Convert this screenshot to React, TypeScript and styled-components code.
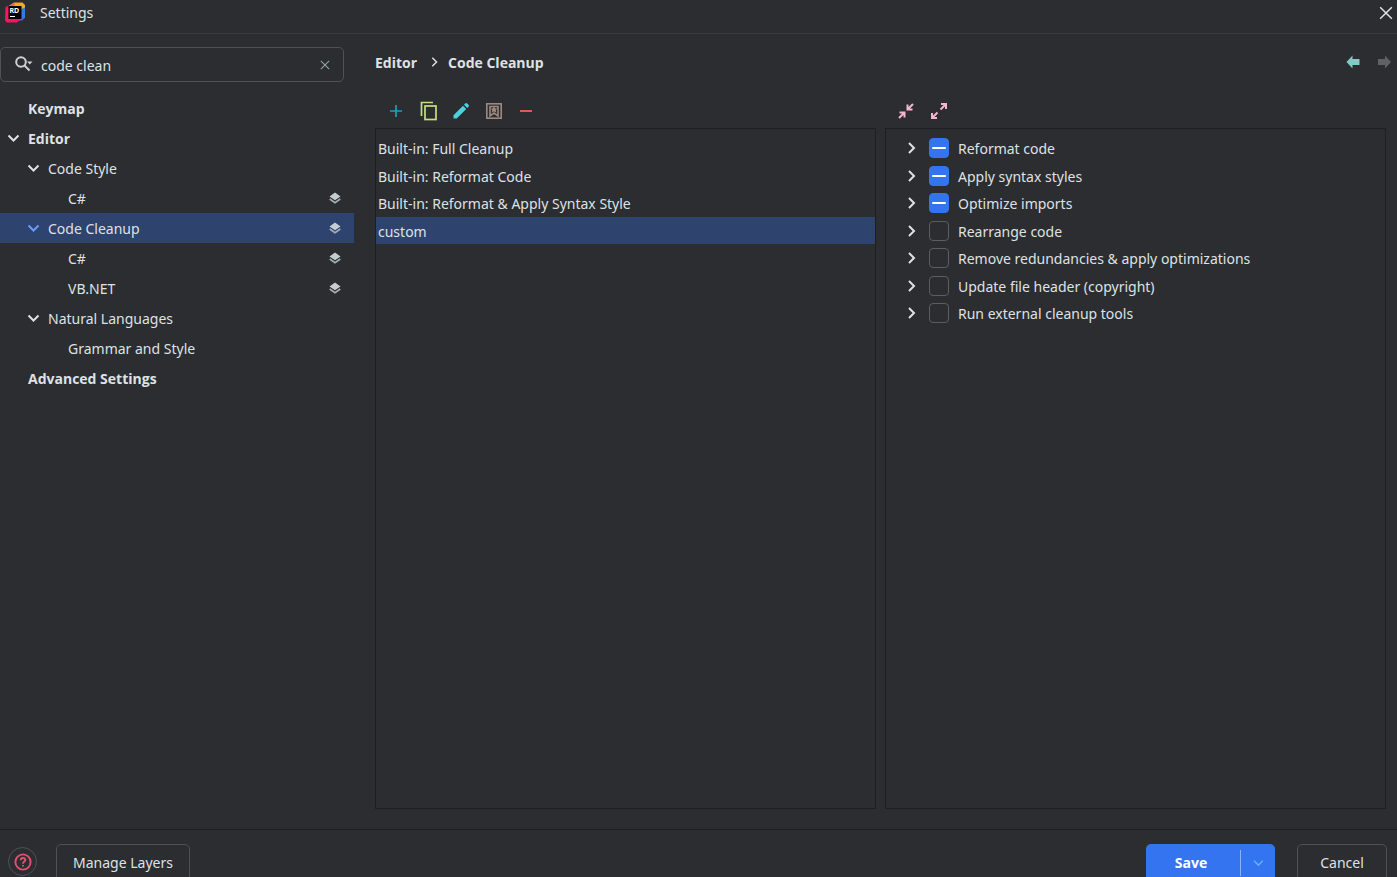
import React, { useEffect, useRef, useState } from 'react';
import styled, { createGlobalStyle, css } from 'styled-components';

const Global = createGlobalStyle`
  *, *::before, *::after { box-sizing: border-box; }
  body {
    margin: 0;
    background: #2b2d30;
    color: #dfe1e5;
    font: 14px/20px "Noto Sans", "Open Sans", sans-serif;
  }
  button, input { font: inherit; color: inherit; }
  button { padding: 0; border: 0; background: none; cursor: pointer; }
  svg { display: block; flex: none; }
  ul, h1 { margin: 0; padding: 0; list-style: none; font: inherit; }
`;

const Window = styled.div`
  display: flex;
  flex-direction: column;
  height: 100vh;
  overflow: hidden;
`;

const TitleBar = styled.header`
  display: flex;
  align-items: center;
  height: 34px;
  padding: 0 4px 7px 4px;
  border-bottom: 1px solid #393b40;
`;

const Title = styled.h1`
  flex: 1;
  padding-left: 14px;
`;

const Body = styled.div`
  display: flex;
  flex: 1;
  min-height: 0;
`;

const Sidebar = styled.aside`
  flex: none;
  width: 354px;
  padding-top: 13px;
`;

const SearchBox = styled.label`
  display: flex;
  align-items: center;
  height: 35px;
  margin-right: 10px;
  padding: 0 13px 0 14px;
  border: 1px solid #4e5157;
  border-radius: 5px;
`;

const SearchInput = styled.input`
  flex: 1;
  min-width: 0;
  height: 24px;
  margin-top: 2px;
  padding: 0 0 0 6px;
  border: 0;
  outline: 0;
  background: none;
`;

const Tree = styled.ul`
  padding-top: 11px !important;
`;

const TreeRow = styled.li<{ $depth: number; $strong?: boolean; $selected?: boolean }>`
  display: flex;
  align-items: center;
  height: 30px;
  padding: 0 13px 0 ${(p) => 6 + p.$depth * 20}px;
  ${(p) =>
    p.$strong &&
    css`
      font-family: "Open Sans", sans-serif;
      font-weight: 700;
    `}
  ${(p) =>
    p.$selected &&
    css`
      background: #2e436e;
    `}
`;

const TreeToggle = styled.span`
  width: 22px;
`;

const TreeLabel = styled.span`
  flex: 1;
  padding-top: 2px;
`;

const Main = styled.main`
  display: flex;
  flex: 1;
  flex-direction: column;
  min-width: 0;
  padding: 18px 11px 20px 21px;
`;

const Crumbs = styled.nav`
  display: flex;
  align-items: center;
  height: 22px;
  margin-right: -6px;
  font-family: "Open Sans", sans-serif;
  font-weight: 700;
`;

const CrumbSeparator = styled.span`
  padding: 0 8px 2px 11px;
`;

const History = styled.div`
  display: flex;
  gap: 16px;
  margin-left: auto;
  padding-bottom: 2px;
`;

const Columns = styled.div`
  display: flex;
  flex: 1;
  gap: 9px;
  min-height: 0;
  padding-top: 26px;
`;

const Column = styled.section`
  display: flex;
  flex: 1;
  flex-direction: column;
  min-width: 0;
`;

const Toolbar = styled.div<{ $width: number }>`
  display: flex;
  justify-content: space-between;
  width: ${(p) => p.$width}px;
  height: 28px;
  margin-left: 10px;
`;

const IconButton = styled.button`
  display: flex;
  align-items: center;
  justify-content: center;
  width: 22px;
  height: 22px;
`;

const Panel = styled.ul`
  flex: 1;
  border: 1px solid #1e1f22;
  padding-top: 5px !important;
`;

const Row = styled.li<{ $selected?: boolean; $indent: number }>`
  display: flex;
  align-items: center;
  height: 27px;
  padding-left: ${(p) => p.$indent}px;
  background: ${(p) => (p.$selected ? '#2e436e' : 'none')};
  &:nth-child(odd) { margin-bottom: 1px; }
`;

const RowText = styled.span`
  padding-top: 2px;
`;

const CheckLabel = styled.label`
  display: flex;
  align-items: center;
  gap: 9px;
  padding-left: 11px;
`;

const CheckBox = styled.input`
  display: grid;
  place-items: center;
  appearance: none;
  width: 20px;
  height: 20px;
  margin: 0;
  border: 1px solid #5a5d63;
  border-radius: 4px;
  &:indeterminate {
    border-color: #3574f0;
    background: #3574f0;
  }
  &:indeterminate::before {
    content: '';
    width: 14px;
    height: 2px;
    border-radius: 1px;
    background: #fff;
  }
`;

const Footer = styled.footer`
  display: flex;
  flex: none;
  height: 48px;
  padding: 14px 10px 0 8px;
  border-top: 1px solid #1e1f22;
`;

const HelpButton = styled.button`
  display: grid;
  place-items: center;
  width: 29px;
  height: 29px;
  margin: 3px 19px 0 0;
  border: 1px solid #4e5157;
  border-radius: 50%;
`;

const OutlineButton = styled.button<{ $width: number }>`
  width: ${(p) => p.$width}px;
  height: 37px;
  border: 1px solid #4e5157;
  border-radius: 5px;
`;

const SaveGroup = styled.div`
  display: flex;
  align-items: center;
  height: 37px;
  margin: 0 22px 0 auto;
  border-radius: 5px;
  background: #3574f0;
`;

const SaveButton = styled.button`
  width: 94px;
  height: 37px;
  padding-right: 4px;
  color: #fff;
  font-family: "Open Sans", sans-serif;
  font-weight: 700;
`;

const SaveMenu = styled.button`
  display: grid;
  place-items: center;
  width: 35px;
  height: 26px;
  border-left: 1px solid #8fb1f5;
`;

const Chevron = ({ open, color = '#dfe1e5', size = 14, width = 2 }: { open?: boolean; color?: string; size?: number; width?: number }) => (
  <svg width={size} height={size} viewBox="0 0 14 14" fill="none" stroke={color} strokeWidth={width}>
    <path d={open ? 'M2.500 4.500l5 5 5-5' : 'M5 2l5 5-5 5'} />
  </svg>
);

const AppLogo = () => (
  <svg width="22" height="22" viewBox="0 0 22 22">
    <path d="M7 2.500L10 0.500H18.500L21 3V8H8Z" fill="#f7a823" />
    <path d="M17 7L21 5.500V15.500L18 18.500H12V12Z" fill="#2f7de1" />
    <path d="M1.500 5L5 3.500L6 15H15V18.500L13 20.500H3L1 18.500Z" fill="#f5175f" />
    <path d="M7 2.500L11 1L10 5H5V3.500Z" fill="#f2683f" />
    <rect x="4.500" y="4" width="13" height="13" fill="#000" />
    <text x="5.500" y="10.500" fontSize="7" fontWeight="700" fill="#fff">RD</text>
    <path d="M6 14h5v1H6z" fill="#fff" />
  </svg>
);

const SearchIcon = () => (
  <svg width="20" height="20" viewBox="0 0 20 20" fill="none" stroke="#ced0d6" strokeWidth="2">
    <circle cx="6" cy="7" r="4.800" />
    <path d="M9.500 10.500l5 5" />
    <path d="M12 6.500h5.500l-2.750 3z" fill="#ced0d6" stroke="none" />
  </svg>
);

const Cross = ({ size, color }: { size: number; color: string }) => (
  <svg width={size} height={size} viewBox="0 0 12 12" stroke={color} strokeWidth="1.300">
    <path d="M1 1l10 10M11 1L1 11" />
  </svg>
);

const LayersIcon = () => (
  <svg width="12" height="12" viewBox="0 0 12 12">
    <path d="M6 0.500L11.500 4.500L6 8.300L0.500 4.500Z" fill="#c3cdd2" />
    <path d="M0.700 7L6 10.600L11.300 7" fill="none" stroke="#a3aeb4" strokeWidth="1.700" />
  </svg>
);

const Arrow = ({ color, flip }: { color: string; flip?: boolean }) => (
  <svg width="15" height="14" viewBox="0 0 15 14" fill={color}>
    <path d={flip ? 'M14 7L8 0.500V4H1V10H8V13.500Z' : 'M0.500 7L6.500 0.500V4H13.500V10H6.500V13.500Z'} />
  </svg>
);

const AddIcon = () => (
  <svg width="14" height="14" viewBox="0 0 14 14" stroke="#16a5b8" strokeWidth="1.700">
    <path d="M7 1v12M1 7h12" />
  </svg>
);

const CopyIcon = () => (
  <svg width="20" height="20" viewBox="0 0 20 20" fill="none" stroke="#c5e17e" strokeWidth="1.700">
    <rect x="6" y="5" width="11" height="13.500" />
    <path d="M2.500 15V1.500H14" />
  </svg>
);

const EditIcon = () => (
  <svg width="18" height="18" viewBox="0 0 18 18" fill="#4fd0df">
    <path d="M1.500 13.300L11 3.800L14.200 7L4.700 16.500H1.500ZM12 2.800L13.500 1.300Q14.200 0.800 14.900 1.300L16.700 3.100Q17.200 3.800 16.700 4.500L15.200 6Z" />
  </svg>
);

const SaveProfileIcon = () => (
  <svg width="18" height="18" viewBox="0 0 18 18" fill="none" stroke="#a1887f" strokeWidth="1.600">
    <rect x="1.800" y="1.800" width="14.400" height="14.400" />
    <path d="M5 4.500H13V14L9 11L5 14Z" />
    <path d="M9 4.500l1.200 2h2l-1.500 1.800.7 2.200L9 9.600l-2.400.9.7-2.200-1.500-1.800h2z" fill="#a1887f" stroke="none" />
  </svg>
);

const RemoveIcon = () => (
  <svg width="14" height="14" viewBox="0 0 14 14">
    <path d="M1 6h12v2H1z" fill="#e05a55" />
  </svg>
);

const CollapseIcon = () => (
  <svg width="16" height="16" viewBox="0 0 16 16" fill="none" stroke="#f3b6cb" strokeWidth="2">
    <path d="M15 1L10 6M9.500 1.500V6.500H14.500M1 15L6 10M1.500 9.500H6.500V14.500" />
  </svg>
);

const ExpandIcon = () => (
  <svg width="16" height="16" viewBox="0 0 16 16" fill="none" stroke="#f3b6cb" strokeWidth="2">
    <path d="M9.500 6.500L15 1M10 1H15V6M6.500 9.500L1 15M1 10V15H6" />
  </svg>
);

const HelpIcon = () => (
  <svg width="18" height="18" viewBox="0 0 18 18" fill="none" stroke="#e0526e" strokeWidth="1.900">
    <circle cx="9" cy="9" r="7.600" />
    <path d="M6.700 7.200Q6.800 5 9 5T11.300 7.100C11.300 8.700 9 8.600 9 10.800M9 12V13.600" />
  </svg>
);

type Node = { label: string; depth: number; open?: boolean; strong?: boolean; selected?: boolean; layered?: boolean };

const tree: Node[] = [
  { label: 'Keymap', depth: 0, strong: true },
  { label: 'Editor', depth: 0, open: true, strong: true },
  { label: 'Code Style', depth: 1, open: true },
  { label: 'C#', depth: 2, layered: true },
  { label: 'Code Cleanup', depth: 1, open: true, selected: true, layered: true },
  { label: 'C#', depth: 2, layered: true },
  { label: 'VB.NET', depth: 2, layered: true },
  { label: 'Natural Languages', depth: 1, open: true },
  { label: 'Grammar and Style', depth: 2 },
  { label: 'Advanced Settings', depth: 0, strong: true },
];

const profiles = ['Built-in: Full Cleanup', 'Built-in: Reformat Code', 'Built-in: Reformat & Apply Syntax Style', 'custom'];

const steps = [
  { label: 'Reformat code', partial: true },
  { label: 'Apply syntax styles', partial: true },
  { label: 'Optimize imports', partial: true },
  { label: 'Rearrange code', partial: false },
  { label: 'Remove redundancies & apply optimizations', partial: false },
  { label: 'Update file header (copyright)', partial: false },
  { label: 'Run external cleanup tools', partial: false },
];

const Step = ({ label, partial }: { label: string; partial: boolean }) => {
  const box = useRef<HTMLInputElement>(null);
  useEffect(() => {
    if (box.current) box.current.indeterminate = partial;
  }, [partial]);
  return (
    <Row $indent={18}>
      <button aria-label={`Expand ${label}`}><Chevron /></button>
      <CheckLabel>
        <CheckBox ref={box} type="checkbox" />
        <RowText>{label}</RowText>
      </CheckLabel>
    </Row>
  );
};

export default function App() {
  const [query, setQuery] = useState('code clean');
  const [profile, setProfile] = useState('custom');

  return (
    <>
      <Global />
      <Window>
        <TitleBar>
          <AppLogo />
          <Title>Settings</Title>
          <button aria-label="Close"><Cross size={14} color="#dfe1e5" /></button>
        </TitleBar>
        <Body>
          <Sidebar>
            <SearchBox>
              <SearchIcon />
              <SearchInput aria-label="Search settings" value={query} onChange={(e) => setQuery(e.target.value)} />
              <button aria-label="Clear search" onClick={() => setQuery('')}><Cross size={10} color="#8fa5a8" /></button>
            </SearchBox>
            <Tree>
              {tree.map((n, i) => (
                <TreeRow key={i} $depth={n.depth} $strong={n.strong} $selected={n.selected}>
                  <TreeToggle>{n.open && <Chevron open color={n.selected ? '#6b9bfa' : '#dfe1e5'} />}</TreeToggle>
                  <TreeLabel>{n.label}</TreeLabel>
                  {n.layered && <LayersIcon />}
                </TreeRow>
              ))}
            </Tree>
          </Sidebar>
          <Main>
            <Crumbs aria-label="Breadcrumb">
              <span>Editor</span>
              <CrumbSeparator><Chevron size={12} width={1.7} /></CrumbSeparator>
              <span>Code Cleanup</span>
              <History>
                <button aria-label="Back"><Arrow color="#80cbc4" /></button>
                <button aria-label="Forward"><Arrow color="#5f6164" flip /></button>
              </History>
            </Crumbs>
            <Columns>
              <Column>
                <Toolbar $width={152}>
                  <IconButton aria-label="Add"><AddIcon /></IconButton>
                  <IconButton aria-label="Copy"><CopyIcon /></IconButton>
                  <IconButton aria-label="Edit"><EditIcon /></IconButton>
                  <IconButton aria-label="Set as default"><SaveProfileIcon /></IconButton>
                  <IconButton aria-label="Remove"><RemoveIcon /></IconButton>
                </Toolbar>
                <Panel>
                  {profiles.map((p) => (
                    <Row key={p} $indent={2} $selected={p === profile} onClick={() => setProfile(p)}>
                      <RowText>{p}</RowText>
                    </Row>
                  ))}
                </Panel>
              </Column>
              <Column>
                <Toolbar $width={55}>
                  <IconButton aria-label="Collapse all"><CollapseIcon /></IconButton>
                  <IconButton aria-label="Expand all"><ExpandIcon /></IconButton>
                </Toolbar>
                <Panel>
                  {steps.map((s) => (
                    <Step key={s.label} {...s} />
                  ))}
                </Panel>
              </Column>
            </Columns>
          </Main>
        </Body>
        <Footer>
          <HelpButton aria-label="Help"><HelpIcon /></HelpButton>
          <OutlineButton $width={134}>Manage Layers</OutlineButton>
          <SaveGroup>
            <SaveButton>Save</SaveButton>
            <SaveMenu aria-label="Save options"><Chevron open size={12} color="#5cb8ff" width={1.7} /></SaveMenu>
          </SaveGroup>
          <OutlineButton $width={90}>Cancel</OutlineButton>
        </Footer>
      </Window>
    </>
  );
}
